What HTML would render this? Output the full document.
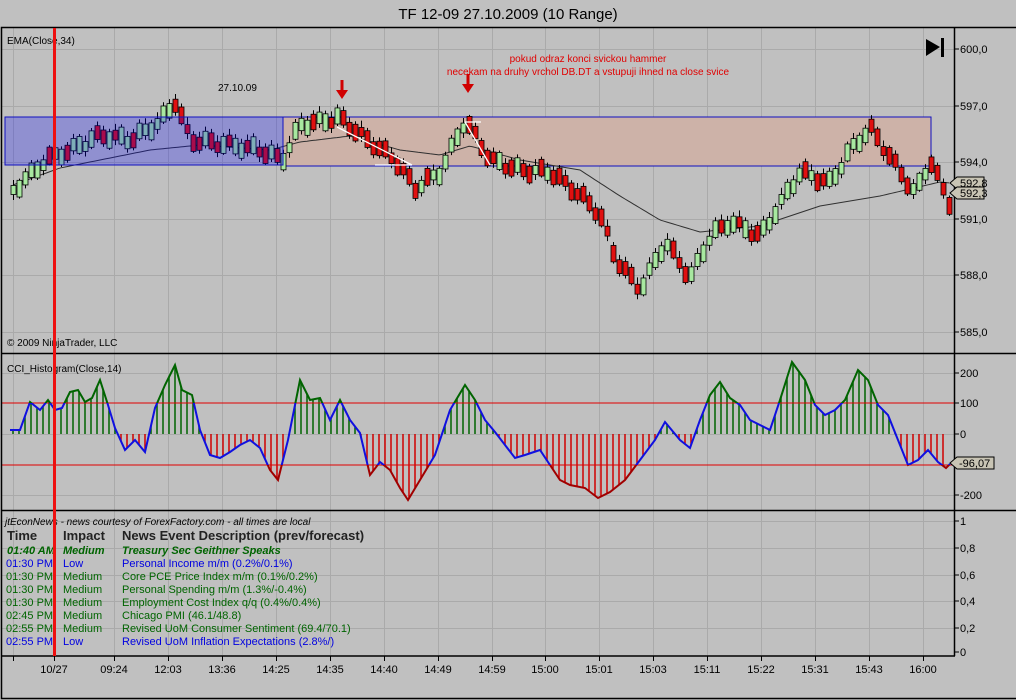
<!DOCTYPE html>
<html><head><meta charset="utf-8"><style>
html,body{margin:0;padding:0;background:#c0c0c0;width:1016px;height:700px;overflow:hidden;font-family:"Liberation Sans",Arial,sans-serif}
svg{display:block}
</style></head><body>
<svg id="s" width="1016" height="700" xmlns="http://www.w3.org/2000/svg" font-family="Liberation Sans, Arial, sans-serif">
<rect width="1016" height="700" fill="#c0c0c0"/>
<text x="508" y="19" font-size="15" text-anchor="middle" fill="#000">TF 12-09  27.10.2009 (10 Range)</text>
<g id="grid" stroke="#aaaaaa" stroke-width="1"></g>
<rect x="283" y="117" width="648" height="49" fill="#cdb2a8" stroke="#1010c0" stroke-width="1"/>
<path id="ema" fill="none" stroke="#303030" stroke-width="1"/>
<g id="candles"></g>
<rect x="5" y="117" width="278" height="48" fill="#0000ff" fill-opacity="0.25" stroke="#1010c0" stroke-width="1"/>
<g stroke="#fff" stroke-width="1.3" fill="none">
<path d="M337 127 L412 165 M375 165 L412 165"/>
<path d="M465 122 L490 165 M465 122 L481 122"/>
</g>
<g fill="#d00000" stroke="none">
<rect x="340.5" y="80" width="3" height="11"/><path d="M336 90 L348 90 L342 99 Z"/>
<rect x="466.5" y="74" width="3" height="11"/><path d="M462 84 L474 84 L468 93 Z"/>
</g>
<text x="588" y="62" font-size="10" fill="#e00000" text-anchor="middle">pokud odraz konci svickou hammer</text>
<text x="588" y="75" font-size="10" fill="#e00000" text-anchor="middle">necekam na druhy vrchol DB.DT a vstupuji ihned na close svice</text>
<text x="218" y="91" font-size="10" fill="#000">27.10.09</text>
<text x="7" y="44" font-size="10" fill="#000">EMA(Close,34)</text>
<text x="7" y="346" font-size="10" fill="#000">© 2009 NinjaTrader, LLC</text>
<path d="M926 39 L940 47 L926 56 Z" fill="#000"/><rect x="941" y="38" width="3" height="19" fill="#000"/>

<text x="7" y="372" font-size="10" fill="#000">CCI_Histogram(Close,14)</text>
<g id="hist"></g>
<line x1="2" y1="403" x2="954" y2="403" stroke="#e00000"/>
<line x1="2" y1="465" x2="954" y2="465" stroke="#e00000"/>
<defs>
<clipPath id="cU"><rect x="0" y="340" width="960" height="63"/></clipPath>
<clipPath id="cM"><rect x="0" y="403" width="960" height="62"/></clipPath>
<clipPath id="cD"><rect x="0" y="465" width="960" height="50"/></clipPath>
</defs>
<path id="cl1" fill="none" stroke="#006400" stroke-width="2" clip-path="url(#cU)"/>
<path id="cl2" fill="none" stroke="#1010e0" stroke-width="2" clip-path="url(#cM)"/>
<path id="cl3" fill="none" stroke="#a00000" stroke-width="2" clip-path="url(#cD)"/>

<g font-size="11">
<text x="5" y="525" font-size="10" font-style="italic" fill="#000">jtEconNews - news courtesy of ForexFactory.com - all times are local</text>
<text x="7" y="540" font-size="13" font-weight="bold" fill="#222">Time</text>
<text x="63" y="540" font-size="13" font-weight="bold" fill="#222">Impact</text>
<text x="122" y="540" font-size="13" font-weight="bold" fill="#222">News Event Description (prev/forecast)</text>
<g font-weight="bold" font-style="italic" fill="#006400"><text x="7" y="554">01:40 AM</text><text x="63" y="554">Medium</text><text x="122" y="554">Treasury Sec Geithner Speaks</text></g>
<g fill="#0000e0"><text x="6" y="567">01:30 PM</text><text x="63" y="567">Low</text><text x="122" y="567">Personal Income m/m (0.2%/0.1%)</text></g>
<g fill="#006400"><text x="6" y="580">01:30 PM</text><text x="63" y="580">Medium</text><text x="122" y="580">Core PCE Price Index m/m (0.1%/0.2%)</text></g>
<g fill="#006400"><text x="6" y="593">01:30 PM</text><text x="63" y="593">Medium</text><text x="122" y="593">Personal Spending m/m (1.3%/-0.4%)</text></g>
<g fill="#006400"><text x="6" y="606">01:30 PM</text><text x="63" y="606">Medium</text><text x="122" y="606">Employment Cost Index q/q (0.4%/0.4%)</text></g>
<g fill="#006400"><text x="6" y="619">02:45 PM</text><text x="63" y="619">Medium</text><text x="122" y="619">Chicago PMI (46.1/48.8)</text></g>
<g fill="#006400"><text x="6" y="632">02:55 PM</text><text x="63" y="632">Medium</text><text x="122" y="632">Revised UoM Consumer Sentiment (69.4/70.1)</text></g>
<g fill="#0000e0"><text x="6" y="645">02:55 PM</text><text x="63" y="645">Low</text><text x="122" y="645">Revised UoM Inflation Expectations (2.8%/)</text></g>
</g>

<g stroke="#000" stroke-width="1.5" fill="none">
<rect x="1.5" y="27.5" width="1016" height="671"/>
<line x1="1" y1="353.5" x2="1016" y2="353.5"/>
<line x1="1" y1="510.5" x2="1016" y2="510.5"/>
<line x1="954.5" y1="27" x2="954.5" y2="656"/>
<line x1="1" y1="656" x2="955" y2="656"/>
</g>
<rect x="53" y="28" width="3" height="628" fill="#ee1010"/>
<g id="axis" font-size="11" fill="#000"></g>

<g font-size="11">
<path d="M950 183 L957 177 L984 177 L984 189 L957 189 Z" fill="#c8c4b4" stroke="#000"/>
<text x="960" y="187">592,8</text>
<path d="M950 193 L957 187 L984 187 L984 199 L957 199 Z" fill="#c8c4b4" stroke="#000"/>
<text x="960" y="197">592,3</text>
<path d="M950 463 L957 457 L994 457 L994 469 L957 469 Z" fill="#c8c4b4" stroke="#000"/>
<text x="959" y="467">-96,07</text>
</g>
</svg>
<script>
(function(){
var NS="http://www.w3.org/2000/svg";
function el(p,t,a){var e=document.createElementNS(NS,t);for(var k in a)e.setAttribute(k,a[k]);document.getElementById(p).appendChild(e);return e;}
var gx=[13,54,114,168,222,276,330,384,438,492,545,599,653,707,761,815,869,923];
gx.forEach(function(x){el("grid","line",{x1:x+.5,y1:28,x2:x+.5,y2:655});});
[49,106,162,219,275,332].forEach(function(y){el("grid","line",{x1:2,y1:y+.5,x2:954,y2:y+.5});});
[373,434,495].forEach(function(y){el("grid","line",{x1:2,y1:y+.5,x2:954,y2:y+.5});});
[521,548,575,601,628].forEach(function(y){el("grid","line",{x1:2,y1:y+.5,x2:954,y2:y+.5});});
function tick(x1,y1,x2,y2){el("axis","line",{x1:x1,y1:y1,x2:x2,y2:y2,stroke:"#000"});}
function tx(x,y,s,anc){var t=el("axis","text",{x:x,y:y,"text-anchor":anc||"start"});t.textContent=s;}
[[49,"600,0"],[106,"597,0"],[162,"594,0"],[219,"591,0"],[275,"588,0"],[332,"585,0"]].forEach(function(a){tick(954,a[0],959,a[0]);tx(960,a[0]+4,a[1]);});
[[373,"200"],[403,"100"],[434,"0"],[495,"-200"]].forEach(function(a){tick(954,a[0],959,a[0]);tx(960,a[0]+4,a[1]);});
[[521,"1"],[548,"0,8"],[575,"0,6"],[601,"0,4"],[628,"0,2"],[652,"0"]].forEach(function(a){tick(954,a[0],959,a[0]);tx(960,a[0]+4,a[1]);});
var tl=["","10/27","09:24","12:03","13:36","14:25","14:35","14:40","14:49","14:59","15:00","15:01","15:03","15:11","15:22","15:31","15:43","16:00"];
gx.forEach(function(x,i){tick(x+.5,656,x+.5,661);if(tl[i])tx(x,673,tl[i],"middle");});
function interp(pts,x){if(x<=pts[0][0])return pts[0][1];for(var i=0;i<pts.length-1;i++){if(x<=pts[i+1][0]){var a=pts[i],b=pts[i+1],t=(x-a[0])/(b[0]-a[0]);return a[1]+(b[1]-a[1])*t;}}return pts[pts.length-1][1];}
var P=[[13,190],[30,175],[45,160],[70,150],[100,135],[130,140],[160,122],[175,102],[190,140],[230,145],[260,150],[282,160],[300,125],[340,118],[360,135],[395,160],[415,188],[440,172],[465,120],[490,160],[520,170],[550,172],[580,195],[600,215],[615,258],[640,290],[665,242],[690,278],[710,236],[730,222],[760,236],[800,172],[830,183],[850,150],[870,128],[900,172],[915,194],[930,160],[948,202]];
var EM=[[13,185],[60,168],[100,160],[150,150],[200,145],[270,150],[300,142],[350,136],[400,150],[440,155],[470,146],[520,160],[580,170],[620,196],[660,220],[700,232],[760,226],[820,206],[880,196],[940,182],[950,183]];
var d="";for(var x=13;x<=950;x+=3){d+=(x==13?"M":"L")+x+" "+interp(EM,x).toFixed(1)+" ";}
document.getElementById("ema").setAttribute("d",d);
for(var i=0;i<157;i++){var x=13+i*6;
 var mid=interp(P,x)+Math.sin(i*1.7)*4;
 var slope=interp(P,x+6)-interp(P,x-6)+Math.sin(i*2.3)*9;
 var up=slope<0;
 var h=9+Math.abs(Math.sin(i*1.3))*8;
 var top=mid-h/2, bot=mid+h/2;
 var hi=mid-10-Math.abs(Math.sin(i*3.1))*2, lo=mid+10;
 el("candles","line",{x1:x+.5,y1:hi,x2:x+.5,y2:lo,stroke:"#000"});
 el("candles","rect",{x:x-2,y:top,width:5,height:bot-top,fill:up?"#a8e8a0":"#e01010",stroke:"#000","stroke-width":.8});
}
var C=[[10,430],[20,430],[30,402],[40,410],[48,400],[55,410],[62,408],[70,392],[78,390],[85,402],[92,398],[100,380],[108,405],[115,428],[125,450],[135,440],[145,452],[155,408],[165,385],[175,365],[182,390],[192,395],[200,430],[210,455],[220,458],[230,452],[240,445],[250,440],[260,448],[270,470],[278,480],[288,440],[300,380],[310,400],[320,398],[330,420],[340,400],[350,420],[360,433],[370,475],[380,462],[390,470],[400,488],[408,500],[420,480],[435,455],[450,410],[465,385],[475,400],[485,420],[495,432],[505,445],[515,458],[525,455],[540,450],[550,465],[560,480],[570,485],[585,488],[598,498],[610,492],[625,480],[640,460],[655,440],[665,422],[680,440],[690,448],[700,420],[710,395],[720,382],[730,398],[740,405],[750,420],[760,425],[770,430],[780,400],[792,362],[805,380],[815,405],[825,415],[835,410],[845,400],[858,370],[868,380],[878,405],[888,415],[898,440],[908,465],[918,460],[928,450],[938,462],[946,468],[950,464]];
var cd="";C.forEach(function(p,i){cd+=(i?"L":"M")+p[0]+" "+p[1]+" ";});
["cl1","cl2","cl3"].forEach(function(id){document.getElementById(id).setAttribute("d",cd);});
for(var x=13;x<=948;x+=6){var y=interp(C,x);el("hist","line",{x1:x,y1:434,x2:x,y2:y,stroke:y<434?"#006400":"#d00000","stroke-width":1.5});}
})();
</script>
</body></html>
